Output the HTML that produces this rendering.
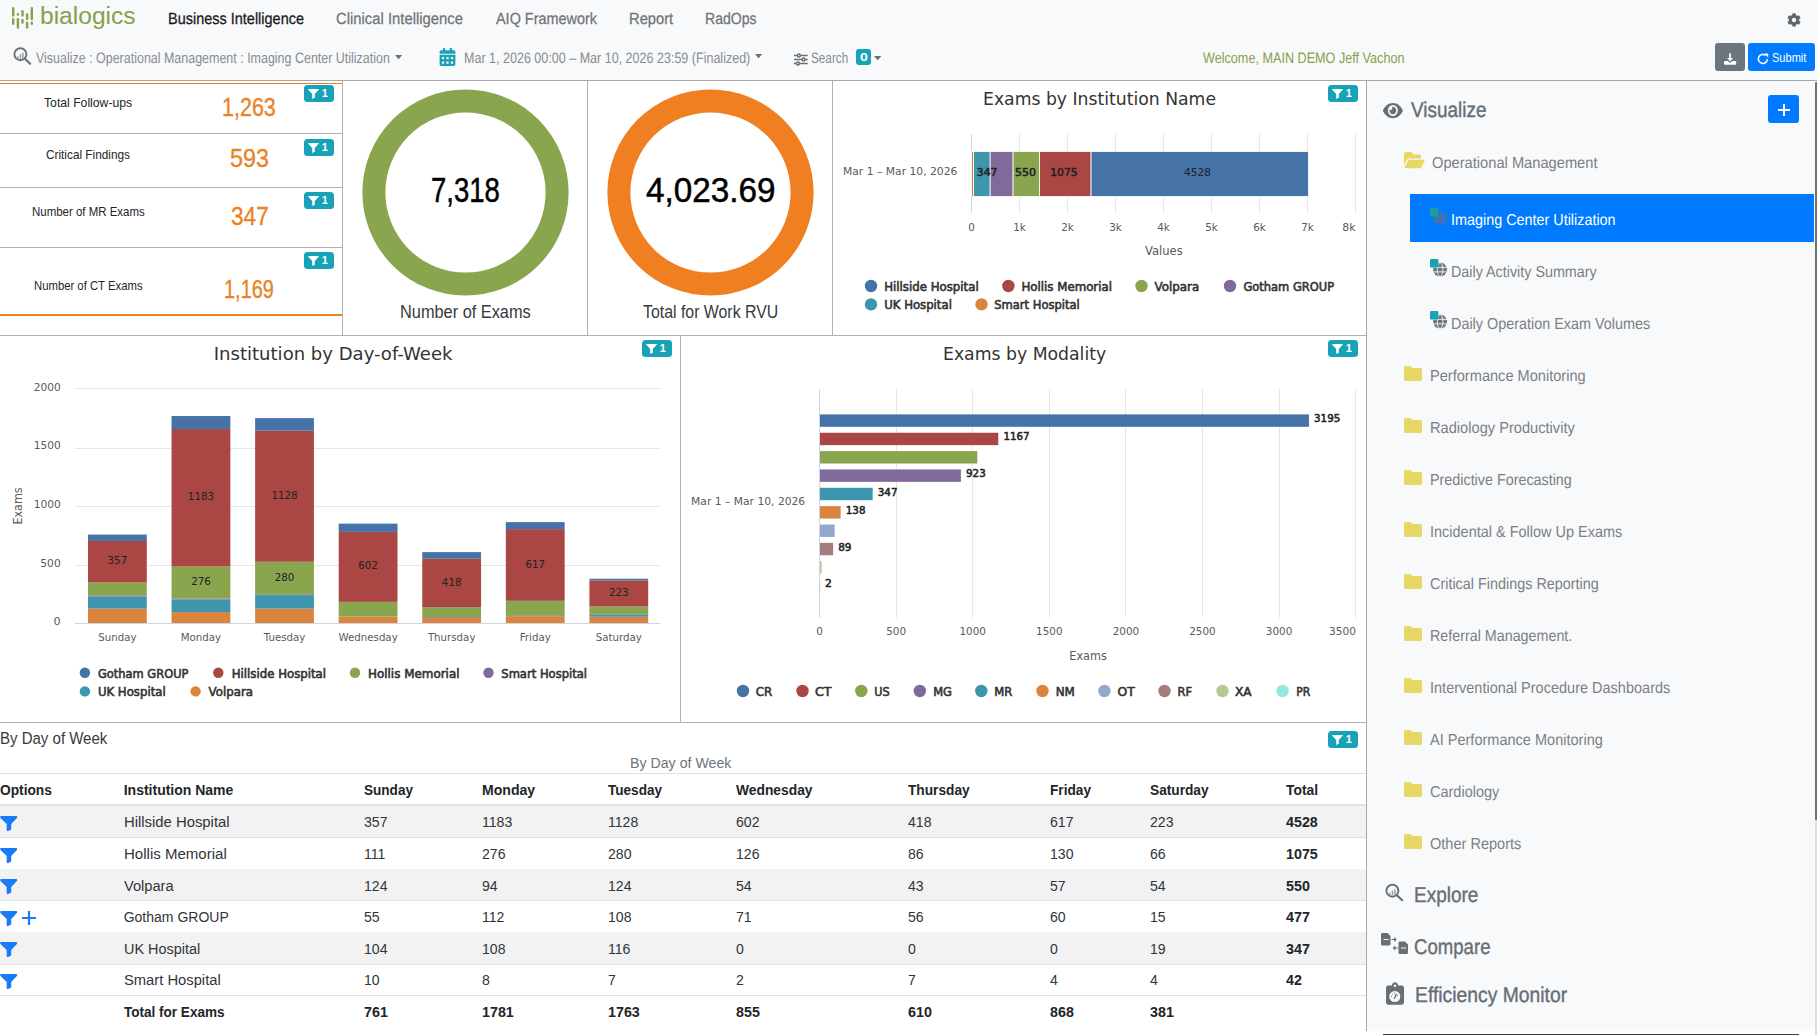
<!DOCTYPE html><html lang="en"><head><meta charset="utf-8"><title>bialogics - Imaging Center Utilization</title><style>
*{box-sizing:border-box;margin:0;padding:0}
html,body{width:1817px;height:1035px;overflow:hidden;background:#fff}
body{position:relative;font-family:"Liberation Sans",sans-serif;color:#212529}
.t{position:absolute;white-space:nowrap;line-height:1;transform-origin:0 0;display:block}
.abs{position:absolute}
svg{position:absolute;overflow:visible}
svg text{font-family:"DejaVu Sans","Liberation Sans",sans-serif}
#header{position:absolute;left:0;top:0;width:1817px;height:81px;background:#f8f9fa;border-bottom:1px solid #a9a9a9}
#main{position:absolute;left:0;top:81px;width:1366px;height:954px;background:#fff}
#side{position:absolute;left:1366px;top:81px;width:451px;height:950px;background:#f8f9fa;border-left:1px solid #a9a9a9}
.hl{position:absolute;height:1px;background:#b2b2b2}
.vl{position:absolute;width:1px;background:#b2b2b2}
.badge{position:absolute;width:30px;height:17px;border-radius:3.5px;background:#17a2b8}
.badge svg{left:3.9px;top:4px}
.badge .t{color:#fff;font-weight:700;font-size:11px;left:17.7px;top:3px}
table,caption,thead,tbody,tfoot,tr,th,td,ul,li,h4,h5,nav{display:contents}
h4,h5,th{font-weight:inherit;font-size:inherit}
</style></head><body>
<header id="header">
<svg width="40" height="36" style="left:0;top:0" viewBox="0 0 40 36"><rect x="12" y="6.9" width="2.4" height="9.7" rx="1.2" fill="#86a04c"/><rect x="12" y="18.1" width="2.4" height="6.9" rx="1.2" fill="#86a04c"/><rect x="16.7" y="13" width="2.4" height="2.7" rx="1.2" fill="#86a04c"/><rect x="16.7" y="18.1" width="2.4" height="10.6" rx="1.2" fill="#86a04c"/><rect x="21.3" y="10.1" width="2.4" height="6.5" rx="1.2" fill="#86a04c"/><rect x="21.3" y="18.8" width="2.4" height="4.9" rx="1.2" fill="#86a04c"/><rect x="25.9" y="13.2" width="2.4" height="6.8" rx="1.2" fill="#86a04c"/><rect x="25.9" y="21.5" width="2.4" height="7.2" rx="1.2" fill="#86a04c"/><rect x="30.6" y="6.9" width="2.4" height="13.4" rx="1.2" fill="#86a04c"/><rect x="30.6" y="21.6" width="2.4" height="3.4" rx="1.2" fill="#86a04c"/></svg>
<span class="t" style="left:39.7px;top:5px;font-size:23px;color:#86a04c;transform:scaleX(1.0682);">bialogics</span>
<nav>
<span class="t" style="left:168.1px;top:11px;font-size:15.5px;color:#16181b;transform:scale(0.9339,1.0409) skewX(0.05deg);transform-origin:0 13px;-webkit-text-stroke:0.25px #16181b;">Business Intelligence</span>
<span class="t" style="left:336px;top:11px;font-size:15.5px;color:#6f7479;transform:scale(0.9564,1.0409) skewX(0.05deg);transform-origin:0 13px;-webkit-text-stroke:0.25px #6f7479;">Clinical Intelligence</span>
<span class="t" style="left:495.7px;top:11px;font-size:15.5px;color:#6f7479;transform:scale(0.9307,1.0409) skewX(0.05deg);transform-origin:0 13px;-webkit-text-stroke:0.25px #6f7479;">AIQ Framework</span>
<span class="t" style="left:628.7px;top:11px;font-size:15.5px;color:#6f7479;transform:scale(0.9500,1.0409) skewX(0.05deg);transform-origin:0 13px;-webkit-text-stroke:0.25px #6f7479;">Report</span>
<span class="t" style="left:705.3px;top:11px;font-size:15.5px;color:#6f7479;transform:scale(0.9075,1.0409) skewX(0.05deg);transform-origin:0 13px;-webkit-text-stroke:0.25px #6f7479;">RadOps</span>
</nav>
<svg width="14" height="14" style="left:1786.6px;top:13px" viewBox="0 0 512 512"><path fill="#5f666d" d="M487.4 315.7l-42.6-24.6c4.3-23.2 4.3-47 0-70.200l42.600-24.600c4.900-2.800 7.100-8.600 5.500-14-11.100-35.600-30-67.800-54.700-94.600-3.800-4.100-10-5.100-14.800-2.300L380.800 110c-17.900-15.400-38.500-27.300-60.800-35.100V25.800c0-5.600-3.900-10.500-9.400-11.700-36.700-8.200-74.300-7.800-109.200 0-5.500 1.200-9.400 6.100-9.400 11.700V75c-22.200 7.900-42.800 19.800-60.800 35.100L88.700 85.500c-4.900-2.800-11-1.900-14.800 2.300-24.700 26.700-43.600 58.900-54.700 94.600-1.700 5.400.6 11.200 5.500 14L67.300 221c-4.300 23.200-4.300 47 0 70.200l-42.600 24.600c-4.900 2.800-7.100 8.600-5.500 14 11.100 35.600 30 67.800 54.700 94.600 3.800 4.100 10 5.100 14.800 2.300l42.600-24.600c17.900 15.400 38.500 27.300 60.800 35.100v49.200c0 5.600 3.900 10.500 9.400 11.700 36.700 8.200 74.300 7.800 109.200 0 5.500-1.200 9.400-6.100 9.400-11.700v-49.200c22.200-7.900 42.800-19.800 60.800-35.100l42.600 24.600c4.900 2.800 11 1.900 14.800-2.300 24.700-26.700 43.600-58.900 54.700-94.600 1.500-5.500-.7-11.300-5.600-14.100zM256 336c-44.100 0-80-35.900-80-80s35.900-80 80-80 80 35.900 80 80-35.900 80-80 80z"/></svg>
<svg width="18" height="17" style="left:12.6px;top:46.8px" viewBox="0 0 18 17"><circle cx="7.400" cy="7.200" r="6" fill="none" stroke="#6b7075" stroke-width="1.900"/><path d="M11.900 11.700L17.200 16.700" stroke="#6b7075" stroke-width="2.100" stroke-linecap="round"/><path d="M4.700 11.700v-2.500M7.500 11.700v-4.500M9.900 11.700v-6" stroke="#9a9fa3" stroke-width="1.500"/></svg>
<span class="t" style="left:36.1px;top:51px;font-size:14.5px;color:#868c92;transform:scale(0.8598,1.0425) skewX(0.05deg);transform-origin:0 12px;">Visualize : Operational Management : Imaging Center Utilization</span>
<svg width="8" height="5" style="left:394.8px;top:54.6px" viewBox="0 0 8 5"><path d="M0 0h7.200L3.600 4.200z" fill="#6b7075"/></svg>
<svg width="17" height="18" style="left:439px;top:48px" viewBox="0 0 448 512"><path fill="#17a2b8" d="M0 464c0 26.500 21.500 48 48 48h352c26.500 0 48-21.500 48-48V192H0v272zm320-196c0-6.600 5.400-12 12-12h40c6.600 0 12 5.400 12 12v40c0 6.600-5.400 12-12 12h-40c-6.600 0-12-5.400-12-12v-40zm0 128c0-6.600 5.400-12 12-12h40c6.600 0 12 5.400 12 12v40c0 6.600-5.400 12-12 12h-40c-6.600 0-12-5.400-12-12v-40zM192 268c0-6.600 5.400-12 12-12h40c6.600 0 12 5.400 12 12v40c0 6.600-5.400 12-12 12h-40c-6.600 0-12-5.400-12-12v-40zm0 128c0-6.600 5.400-12 12-12h40c6.600 0 12 5.400 12 12v40c0 6.600-5.400 12-12 12h-40c-6.600 0-12-5.400-12-12v-40zM64 268c0-6.600 5.400-12 12-12h40c6.600 0 12 5.400 12 12v40c0 6.600-5.400 12-12 12H76c-6.600 0-12-5.400-12-12v-40zm0 128c0-6.600 5.400-12 12-12h40c6.600 0 12 5.400 12 12v40c0 6.600-5.400 12-12 12H76c-6.600 0-12-5.400-12-12v-40zM400 64h-48V16c0-8.800-7.200-16-16-16h-32c-8.800 0-16 7.200-16 16v48H160V16c0-8.800-7.200-16-16-16h-32c-8.800 0-16 7.200-16 16v48H48C21.500 64 0 85.500 0 112v48h448v-48c0-26.500-21.500-48-48-48z"/></svg>
<span class="t" style="left:463.8px;top:51px;font-size:14.5px;color:#868c92;transform:scale(0.8642,1.0425) skewX(0.05deg);transform-origin:0 12px;">Mar 1, 2026 00:00 – Mar 10, 2026 23:59 (Finalized)</span>
<svg width="8" height="5" style="left:754.6px;top:53.6px" viewBox="0 0 8 5"><path d="M0 0h7.200L3.600 4.200z" fill="#6b7075"/></svg>
<svg width="14.200" height="13" style="left:794.1px;top:52.5px" viewBox="0 0 15 13"><g stroke="#6b7075" stroke-width="1.600" fill="#f8f9fa"><path d="M0 2.300h14.500M0 6.500h14.500M0 10.700h14.500"/><circle cx="5.200" cy="2.300" r="1.500"/><circle cx="10.200" cy="6.500" r="1.500"/><circle cx="4.200" cy="10.700" r="1.500"/></g></svg>
<span class="t" style="left:811.3px;top:51px;font-size:14.5px;color:#868c92;transform:scale(0.8097,1.0425) skewX(0.05deg);transform-origin:0 12px;">Search</span>
<span class="abs" style="left:856px;top:49px;width:14.8px;height:15.8px;border-radius:3px;background:#17a2b8"></span>
<span class="t" style="left:859.5px;top:52px;font-size:11px;color:#fff;font-weight:700;transform:scaleX(1.2749);">0</span>
<svg width="8" height="5" style="left:874px;top:55.700px" viewBox="0 0 8 5"><path d="M0 0h7.400L3.700 4.200z" fill="#6b7075"/></svg>
<span class="t" style="left:1203.3px;top:51px;font-size:14.5px;color:#86a04c;transform:scale(0.8713,1.0425) skewX(0.05deg);transform-origin:0 12px;">Welcome, MAIN DEMO Jeff Vachon</span>
<span class="abs" style="left:1715px;top:43px;width:30px;height:28px;border-radius:3px;background:#6c757d"></span>
<svg width="12.200" height="12" style="left:1723.8px;top:52.800px" viewBox="0 0 13 12.500"><path fill="#fff" d="M5.600 0h1.800v5.300h2.300L6.500 8.700 3.300 5.300h2.300z"/><path fill="#fff" d="M1.500 8.400h2.700l2.300 2 2.300-2h2.700c.83 0 1.500.67 1.500 1.500v1.100c0 .83-.67 1.500-1.500 1.500h-10C.67 12.500 0 11.830 0 11v-1.100c0-.83.67-1.500 1.500-1.500z"/></svg>
<span class="abs" style="left:1748px;top:43px;width:67px;height:28px;border-radius:3px;background:#007bff"></span>
<svg width="12" height="12" style="left:1757.4px;top:53.300px" viewBox="0 0 12 12"><path d="M10.300 6.100A4.500 4.500 0 1 1 8.600 2.400" fill="none" stroke="#fff" stroke-width="1.500"/><path d="M7 .4h4.200v4.200z" fill="#fff"/></svg>
<span class="t" style="left:1772.1px;top:52px;font-size:12px;color:#fff;transform:scaleX(0.9210);">Submit</span>
</header>
<main id="main">
<i class="hl" style="left:0px;top:254px;width:1366px;"></i>
<i class="hl" style="left:0px;top:641px;width:1366px;"></i>
<i class="vl" style="left:342px;top:0px;height:254px;"></i>
<i class="vl" style="left:587px;top:0px;height:254px;"></i>
<i class="vl" style="left:832px;top:0px;height:254px;"></i>
<i class="vl" style="left:680px;top:254px;height:387px;"></i>
<section id="kpi">
<i class="hl" style="left:0px;top:2px;width:342px;background:#e98326;"></i>
<i class="hl" style="left:0px;top:233px;width:342px;background:#e98326;height:1.5px;"></i>
<i class="hl" style="left:0px;top:52px;width:342px;"></i>
<i class="hl" style="left:0px;top:106px;width:342px;"></i>
<i class="hl" style="left:0px;top:166px;width:342px;"></i>
<span class="t" style="left:44.3px;top:16px;font-size:12.6px;color:#212529;transform:scaleX(0.9688);">Total Follow-ups</span>
<span class="t" style="left:222px;top:14px;font-size:25px;color:#e98326;transform:scaleX(0.8599);-webkit-text-stroke:0.35px #e98326;">1,263</span>
<span class="badge" style="left:304px;top:4px"><svg width="11" height="10" viewBox="0 0 11 10"><path fill="#fff" d="M.3 0h10.400c.3 0 .4.300.2.500L6.800 5v3.700L4.200 10V5L.1.500C-.1.300 0 0 .3 0z"/></svg><span class="t">1</span></span>
<span class="t" style="left:46.2px;top:68px;font-size:12.6px;color:#212529;transform:scaleX(0.9372);">Critical Findings</span>
<span class="t" style="left:229.5px;top:65px;font-size:25px;color:#e98326;transform:scaleX(0.9350);-webkit-text-stroke:0.35px #e98326;">593</span>
<span class="badge" style="left:304px;top:57.5px"><svg width="11" height="10" viewBox="0 0 11 10"><path fill="#fff" d="M.3 0h10.400c.3 0 .4.300.2.500L6.800 5v3.700L4.200 10V5L.1.500C-.1.300 0 0 .3 0z"/></svg><span class="t">1</span></span>
<span class="t" style="left:32px;top:125px;font-size:12.6px;color:#212529;transform:scaleX(0.9102);">Number of MR Exams</span>
<span class="t" style="left:230.5px;top:123px;font-size:25px;color:#e98326;transform:scaleX(0.9038);-webkit-text-stroke:0.35px #e98326;">347</span>
<span class="badge" style="left:304px;top:111px"><svg width="11" height="10" viewBox="0 0 11 10"><path fill="#fff" d="M.3 0h10.400c.3 0 .4.300.2.500L6.800 5v3.700L4.200 10V5L.1.500C-.1.300 0 0 .3 0z"/></svg><span class="t">1</span></span>
<span class="t" style="left:33.9px;top:199px;font-size:12.6px;color:#212529;transform:scaleX(0.8982);">Number of CT Exams</span>
<span class="t" style="left:224px;top:196px;font-size:25px;color:#e98326;transform:scaleX(0.7976);-webkit-text-stroke:0.35px #e98326;">1,169</span>
<span class="badge" style="left:304px;top:171px"><svg width="11" height="10" viewBox="0 0 11 10"><path fill="#fff" d="M.3 0h10.400c.3 0 .4.300.2.500L6.800 5v3.700L4.200 10V5L.1.500C-.1.300 0 0 .3 0z"/></svg><span class="t">1</span></span>
</section>
<section><svg width="245" height="254" style="left:342.5px;top:0" viewBox="342.5 81 245 254"><circle cx="465" cy="192.500" r="91.600" fill="none" stroke="#89a54e" stroke-width="23"/></svg><span class="t" style="left:430.5px;top:92px;font-size:35.5px;color:#000;transform:scaleX(0.7744);-webkit-text-stroke:0.5px #000;">7,318</span><span class="t" style="left:400px;top:223px;font-size:17.5px;color:#343a40;transform:scaleX(0.9333);">Number of Exams</span></section>
<section><svg width="245" height="254" style="left:588.4px;top:0" viewBox="588.4 81 245 254"><circle cx="710.9" cy="192.500" r="91.600" fill="none" stroke="#f07f22" stroke-width="23"/></svg><span class="t" style="left:645.7px;top:92px;font-size:35.5px;color:#000;transform:scaleX(0.9371);-webkit-text-stroke:0.5px #000;">4,023.69</span><span class="t" style="left:642.5px;top:223px;font-size:17.5px;color:#343a40;transform:scaleX(0.9066);">Total for Work RVU</span></section>
<section id="c1"><svg width="533" height="253" style="left:833px;top:1px" viewBox="833 82 533 253"><text x="983" y="104.6" font-size="17" fill="#333" textLength="233" lengthAdjust="spacingAndGlyphs">Exams by Institution Name</text><path d="M971.5 134V212.500" stroke="#ccd6eb" stroke-width="1"/><path d="M1019.5 134V212.500" stroke="#e6e6e6" stroke-width="1"/><path d="M1067.5 134V212.500" stroke="#e6e6e6" stroke-width="1"/><path d="M1115.5 134V212.500" stroke="#e6e6e6" stroke-width="1"/><path d="M1163.5 134V212.500" stroke="#e6e6e6" stroke-width="1"/><path d="M1211.5 134V212.500" stroke="#e6e6e6" stroke-width="1"/><path d="M1259.5 134V212.500" stroke="#e6e6e6" stroke-width="1"/><path d="M1307.5 134V212.500" stroke="#e6e6e6" stroke-width="1"/><path d="M1355.5 134V212.500" stroke="#e6e6e6" stroke-width="1"/><rect x="971.5" y="151.500" width="2.02" height="45" fill="#db843d" stroke="#fff" stroke-width="0.800"/><rect x="973.52" y="151.500" width="16.66" height="45" fill="#3d96ae" stroke="#fff" stroke-width="0.800"/><rect x="990.17" y="151.500" width="22.9" height="45" fill="#80699b" stroke="#fff" stroke-width="0.800"/><rect x="1013.07" y="151.500" width="26.4" height="45" fill="#89a54e" stroke="#fff" stroke-width="0.800"/><rect x="1039.47" y="151.500" width="51.6" height="45" fill="#aa4643" stroke="#fff" stroke-width="0.800"/><rect x="1091.07" y="151.500" width="217.34" height="45" fill="#4572a7" stroke="#fff" stroke-width="0.800"/><text x="976.8" y="176" font-size="11" fill="#222" textLength="20.7" lengthAdjust="spacingAndGlyphs" stroke="#222" stroke-width="0.550">347</text><text x="1015.1" y="176" font-size="11" fill="#222" textLength="20.9" lengthAdjust="spacingAndGlyphs" stroke="#222" stroke-width="0.550">550</text><text x="1050.3" y="176" font-size="11" fill="#222" textLength="27.2" lengthAdjust="spacingAndGlyphs" stroke="#222" stroke-width="0.550">1075</text><text x="1183.9" y="176" font-size="11" fill="#222" textLength="27.1" lengthAdjust="spacingAndGlyphs">4528</text><text x="843" y="175" font-size="11" fill="#5a5a5a" textLength="114.4" lengthAdjust="spacingAndGlyphs">Mar 1 – Mar 10, 2026</text><text x="968.21" y="230.7" font-size="11" fill="#5a5a5a" textLength="6.58" lengthAdjust="spacingAndGlyphs">0</text><text x="1013.22" y="230.7" font-size="11" fill="#5a5a5a" textLength="12.57" lengthAdjust="spacingAndGlyphs">1k</text><text x="1061.22" y="230.7" font-size="11" fill="#5a5a5a" textLength="12.57" lengthAdjust="spacingAndGlyphs">2k</text><text x="1109.22" y="230.7" font-size="11" fill="#5a5a5a" textLength="12.57" lengthAdjust="spacingAndGlyphs">3k</text><text x="1157.22" y="230.7" font-size="11" fill="#5a5a5a" textLength="12.57" lengthAdjust="spacingAndGlyphs">4k</text><text x="1205.22" y="230.7" font-size="11" fill="#5a5a5a" textLength="12.57" lengthAdjust="spacingAndGlyphs">5k</text><text x="1253.22" y="230.7" font-size="11" fill="#5a5a5a" textLength="12.57" lengthAdjust="spacingAndGlyphs">6k</text><text x="1301.22" y="230.7" font-size="11" fill="#5a5a5a" textLength="12.57" lengthAdjust="spacingAndGlyphs">7k</text><text x="1342.2" y="230.7" font-size="11" fill="#5a5a5a" textLength="13.3" lengthAdjust="spacingAndGlyphs">8k</text><text x="1144.9" y="255" font-size="12" fill="#5a5a5a" textLength="37.8" lengthAdjust="spacingAndGlyphs">Values</text><circle cx="871" cy="286" r="6.200" fill="#4572a7"/><text x="884.2" y="290.5" font-size="12" fill="#333" textLength="94.5" lengthAdjust="spacingAndGlyphs" stroke="#333" stroke-width="0.600">Hillside Hospital</text><circle cx="1008.4" cy="286" r="6.200" fill="#aa4643"/><text x="1021.4" y="290.5" font-size="12" fill="#333" textLength="90.6" lengthAdjust="spacingAndGlyphs" stroke="#333" stroke-width="0.600">Hollis Memorial</text><circle cx="1141.5" cy="286" r="6.200" fill="#89a54e"/><text x="1154.5" y="290.5" font-size="12" fill="#333" textLength="44.7" lengthAdjust="spacingAndGlyphs" stroke="#333" stroke-width="0.600">Volpara</text><circle cx="1230" cy="286" r="6.200" fill="#80699b"/><text x="1243.4" y="290.5" font-size="12" fill="#333" textLength="90.8" lengthAdjust="spacingAndGlyphs" stroke="#333" stroke-width="0.600">Gotham GROUP</text><circle cx="871" cy="304.4" r="6.200" fill="#3d96ae"/><text x="884.2" y="308.6" font-size="12" fill="#333" textLength="67.7" lengthAdjust="spacingAndGlyphs" stroke="#333" stroke-width="0.600">UK Hospital</text><circle cx="981.5" cy="304.4" r="6.200" fill="#db843d"/><text x="994.3" y="308.6" font-size="12" fill="#333" textLength="85.4" lengthAdjust="spacingAndGlyphs" stroke="#333" stroke-width="0.600">Smart Hospital</text></svg>
<span class="badge" style="left:1328px;top:4px"><svg width="11" height="10" viewBox="0 0 11 10"><path fill="#fff" d="M.3 0h10.400c.3 0 .4.300.2.500L6.800 5v3.700L4.200 10V5L.1.500C-.1.300 0 0 .3 0z"/></svg><span class="t">1</span></span>
</section>
<section id="c2"><svg width="680" height="386" style="left:0;top:255px" viewBox="0 336 680 386"><text x="213.8" y="359.7" font-size="17" fill="#333" textLength="238.7" lengthAdjust="spacingAndGlyphs">Institution by Day-of-Week</text><path d="M74.500 565.5H660.500" stroke="#e6e6e6" stroke-width="1"/><text x="40.34" y="567" font-size="11" fill="#5a5a5a" textLength="20.36" lengthAdjust="spacingAndGlyphs">500</text><path d="M74.500 506.5H660.500" stroke="#e6e6e6" stroke-width="1"/><text x="33.72" y="508" font-size="11" fill="#5a5a5a" textLength="26.98" lengthAdjust="spacingAndGlyphs">1000</text><path d="M74.500 448.5H660.500" stroke="#e6e6e6" stroke-width="1"/><text x="33.72" y="449" font-size="11" fill="#5a5a5a" textLength="26.98" lengthAdjust="spacingAndGlyphs">1500</text><path d="M74.500 388.5H660.500" stroke="#e6e6e6" stroke-width="1"/><text x="33.72" y="391" font-size="11" fill="#5a5a5a" textLength="26.98" lengthAdjust="spacingAndGlyphs">2000</text><text x="53.6" y="625" font-size="11" fill="#5a5a5a" textLength="7.1" lengthAdjust="spacingAndGlyphs">0</text><rect x="87.98" y="608.59" width="58.800" height="14.41" fill="#db843d"/><rect x="87.98" y="596.51" width="58.800" height="12.08" fill="#3d96ae"/><rect x="87.98" y="595.34" width="58.800" height="1.16" fill="#80699b"/><rect x="87.98" y="582.45" width="58.800" height="12.9" fill="#89a54e"/><rect x="87.98" y="540.96" width="58.800" height="41.48" fill="#aa4643"/><rect x="87.98" y="534.57" width="58.800" height="6.39" fill="#4572a7"/><text x="98.25" y="640.5" font-size="11" fill="#5a5a5a" textLength="38.28" lengthAdjust="spacingAndGlyphs">Sunday</text><rect x="171.55" y="612.08" width="58.800" height="10.92" fill="#db843d"/><rect x="171.55" y="599.53" width="58.800" height="12.55" fill="#3d96ae"/><rect x="171.55" y="598.6" width="58.800" height="0.93" fill="#80699b"/><rect x="171.55" y="566.53" width="58.800" height="32.07" fill="#89a54e"/><rect x="171.55" y="429.06" width="58.800" height="137.46" fill="#aa4643"/><rect x="171.55" y="416.05" width="58.800" height="13.01" fill="#4572a7"/><text x="180.76" y="640.5" font-size="11" fill="#5a5a5a" textLength="40.39" lengthAdjust="spacingAndGlyphs">Monday</text><rect x="255.12" y="608.59" width="58.800" height="14.41" fill="#db843d"/><rect x="255.12" y="595.11" width="58.800" height="13.48" fill="#3d96ae"/><rect x="255.12" y="594.3" width="58.800" height="0.81" fill="#80699b"/><rect x="255.12" y="561.76" width="58.800" height="32.54" fill="#89a54e"/><rect x="255.12" y="430.69" width="58.800" height="131.07" fill="#aa4643"/><rect x="255.12" y="418.14" width="58.800" height="12.55" fill="#4572a7"/><text x="263.71" y="640.5" font-size="11" fill="#5a5a5a" textLength="41.62" lengthAdjust="spacingAndGlyphs">Tuesday</text><rect x="338.7" y="616.73" width="58.800" height="6.27" fill="#db843d"/><rect x="338.7" y="616.49" width="58.800" height="0.23" fill="#80699b"/><rect x="338.7" y="601.85" width="58.800" height="14.64" fill="#89a54e"/><rect x="338.7" y="531.9" width="58.800" height="69.95" fill="#aa4643"/><rect x="338.7" y="523.65" width="58.800" height="8.25" fill="#4572a7"/><text x="338.48" y="640.5" font-size="11" fill="#5a5a5a" textLength="59.23" lengthAdjust="spacingAndGlyphs">Wednesday</text><rect x="422.26" y="618" width="58.800" height="5" fill="#db843d"/><rect x="422.26" y="617.19" width="58.800" height="0.81" fill="#80699b"/><rect x="422.26" y="607.2" width="58.800" height="9.99" fill="#89a54e"/><rect x="422.26" y="558.63" width="58.800" height="48.57" fill="#aa4643"/><rect x="422.26" y="552.12" width="58.800" height="6.51" fill="#4572a7"/><text x="427.88" y="640.5" font-size="11" fill="#5a5a5a" textLength="47.57" lengthAdjust="spacingAndGlyphs">Thursday</text><rect x="505.84" y="616.38" width="58.800" height="6.62" fill="#db843d"/><rect x="505.84" y="615.91" width="58.800" height="0.46" fill="#80699b"/><rect x="505.84" y="600.81" width="58.800" height="15.11" fill="#89a54e"/><rect x="505.84" y="529.11" width="58.800" height="71.7" fill="#aa4643"/><rect x="505.84" y="522.14" width="58.800" height="6.97" fill="#4572a7"/><text x="519.73" y="640.5" font-size="11" fill="#5a5a5a" textLength="31.01" lengthAdjust="spacingAndGlyphs">Friday</text><rect x="589.4" y="616.73" width="58.800" height="6.27" fill="#db843d"/><rect x="589.4" y="614.52" width="58.800" height="2.21" fill="#3d96ae"/><rect x="589.4" y="614.05" width="58.800" height="0.46" fill="#80699b"/><rect x="589.4" y="606.38" width="58.800" height="7.67" fill="#89a54e"/><rect x="589.4" y="580.47" width="58.800" height="25.91" fill="#aa4643"/><rect x="589.4" y="578.73" width="58.800" height="1.74" fill="#4572a7"/><text x="595.75" y="640.5" font-size="11" fill="#5a5a5a" textLength="46.1" lengthAdjust="spacingAndGlyphs">Saturday</text><path d="M75 623.500H660.500" stroke="#ccd6eb" stroke-width="1"/><text x="107.56" y="564.3" font-size="11" fill="#222" textLength="19.65" lengthAdjust="spacingAndGlyphs">357</text><text x="191.13" y="585.16" font-size="11" fill="#222" textLength="19.65" lengthAdjust="spacingAndGlyphs">276</text><text x="187.85" y="500.39" font-size="11" fill="#222" textLength="26.2" lengthAdjust="spacingAndGlyphs">1183</text><text x="274.7" y="580.63" font-size="11" fill="#222" textLength="19.65" lengthAdjust="spacingAndGlyphs">280</text><text x="271.42" y="498.83" font-size="11" fill="#222" textLength="26.2" lengthAdjust="spacingAndGlyphs">1128</text><text x="358.27" y="569.48" font-size="11" fill="#222" textLength="19.65" lengthAdjust="spacingAndGlyphs">602</text><text x="441.84" y="585.51" font-size="11" fill="#222" textLength="19.65" lengthAdjust="spacingAndGlyphs">418</text><text x="525.41" y="567.56" font-size="11" fill="#222" textLength="19.65" lengthAdjust="spacingAndGlyphs">617</text><text x="608.98" y="596.03" font-size="11" fill="#222" textLength="19.65" lengthAdjust="spacingAndGlyphs">223</text><text transform="translate(21.500 506) rotate(-90)" text-anchor="middle" font-size="12" fill="#5a5a5a" textLength="37" lengthAdjust="spacingAndGlyphs">Exams</text><circle cx="84.9" cy="672.8" r="5.200" fill="#4572a7"/><text x="97.9" y="677.7" font-size="12" fill="#333" textLength="90.6" lengthAdjust="spacingAndGlyphs" stroke="#333" stroke-width="0.600">Gotham GROUP</text><circle cx="218.3" cy="672.8" r="5.200" fill="#aa4643"/><text x="231.7" y="677.7" font-size="12" fill="#333" textLength="94.4" lengthAdjust="spacingAndGlyphs" stroke="#333" stroke-width="0.600">Hillside Hospital</text><circle cx="355" cy="672.8" r="5.200" fill="#89a54e"/><text x="368" y="677.7" font-size="12" fill="#333" textLength="91.5" lengthAdjust="spacingAndGlyphs" stroke="#333" stroke-width="0.600">Hollis Memorial</text><circle cx="488.5" cy="672.8" r="5.200" fill="#80699b"/><text x="501.3" y="677.7" font-size="12" fill="#333" textLength="85.7" lengthAdjust="spacingAndGlyphs" stroke="#333" stroke-width="0.600">Smart Hospital</text><circle cx="84.9" cy="691.4" r="5.200" fill="#3d96ae"/><text x="97.9" y="696.1" font-size="12" fill="#333" textLength="67.8" lengthAdjust="spacingAndGlyphs" stroke="#333" stroke-width="0.600">UK Hospital</text><circle cx="195.6" cy="691.4" r="5.200" fill="#db843d"/><text x="208.6" y="696.1" font-size="12" fill="#333" textLength="44.4" lengthAdjust="spacingAndGlyphs" stroke="#333" stroke-width="0.600">Volpara</text></svg>
<span class="badge" style="left:642px;top:259px"><svg width="11" height="10" viewBox="0 0 11 10"><path fill="#fff" d="M.3 0h10.400c.3 0 .4.300.2.500L6.800 5v3.700L4.200 10V5L.1.500C-.1.300 0 0 .3 0z"/></svg><span class="t">1</span></span>
</section>
<section id="c3"><svg width="685" height="386" style="left:681px;top:255px" viewBox="681 336 685 386"><text x="943" y="359.7" font-size="17" fill="#333" textLength="163.2" lengthAdjust="spacingAndGlyphs">Exams by Modality</text><path d="M819.5 389V617.500" stroke="#ccd6eb" stroke-width="1"/><path d="M896.5 389V617.500" stroke="#e6e6e6" stroke-width="1"/><path d="M972.5 389V617.500" stroke="#e6e6e6" stroke-width="1"/><path d="M1049.5 389V617.500" stroke="#e6e6e6" stroke-width="1"/><path d="M1125.5 389V617.500" stroke="#e6e6e6" stroke-width="1"/><path d="M1202.5 389V617.500" stroke="#e6e6e6" stroke-width="1"/><path d="M1279.5 389V617.500" stroke="#e6e6e6" stroke-width="1"/><path d="M1355.5 389V617.500" stroke="#e6e6e6" stroke-width="1"/><rect x="820" y="414.4" width="488.97" height="12.400" fill="#4572a7"/><text x="1314.07" y="422.1" font-size="11" fill="#222" textLength="26.2" lengthAdjust="spacingAndGlyphs" stroke="#222" stroke-width="0.550">3195</text><rect x="820" y="432.75" width="178.28" height="12.400" fill="#aa4643"/><text x="1003.38" y="440.45" font-size="11" fill="#222" textLength="26.2" lengthAdjust="spacingAndGlyphs" stroke="#222" stroke-width="0.550">1167</text><rect x="820" y="451.1" width="157.3" height="12.400" fill="#89a54e"/><rect x="820" y="469.45" width="140.9" height="12.400" fill="#80699b"/><text x="966" y="477.15" font-size="11" fill="#222" textLength="19.75" lengthAdjust="spacingAndGlyphs" stroke="#222" stroke-width="0.550">923</text><rect x="820" y="487.8" width="52.66" height="12.400" fill="#3d96ae"/><text x="877.76" y="495.5" font-size="11" fill="#222" textLength="19.75" lengthAdjust="spacingAndGlyphs" stroke="#222" stroke-width="0.550">347</text><rect x="820" y="506.15" width="20.64" height="12.400" fill="#db843d"/><text x="845.74" y="513.85" font-size="11" fill="#222" textLength="19.75" lengthAdjust="spacingAndGlyphs" stroke="#222" stroke-width="0.550">138</text><rect x="820" y="524.5" width="14.67" height="12.400" fill="#92a8cd"/><rect x="820" y="542.85" width="13.13" height="12.400" fill="#a47d7c"/><text x="838.23" y="550.55" font-size="11" fill="#222" textLength="13.3" lengthAdjust="spacingAndGlyphs" stroke="#222" stroke-width="0.550">89</text><rect x="820" y="561.2" width="1.64" height="12.400" fill="#b5ca92"/><rect x="820" y="579.55" width="0.3" height="12.400" fill="#92e8e1"/><text x="824.91" y="587.25" font-size="11" fill="#222" textLength="6.85" lengthAdjust="spacingAndGlyphs" stroke="#222" stroke-width="0.550">2</text><text x="691.1" y="504.5" font-size="11" fill="#5a5a5a" textLength="114.1" lengthAdjust="spacingAndGlyphs">Mar 1 – Mar 10, 2026</text><text x="816.19" y="635.4" font-size="11" fill="#5a5a5a" textLength="6.62" lengthAdjust="spacingAndGlyphs">0</text><text x="886.17" y="635.4" font-size="11" fill="#5a5a5a" textLength="19.86" lengthAdjust="spacingAndGlyphs">500</text><text x="959.46" y="635.4" font-size="11" fill="#5a5a5a" textLength="26.48" lengthAdjust="spacingAndGlyphs">1000</text><text x="1036.06" y="635.4" font-size="11" fill="#5a5a5a" textLength="26.48" lengthAdjust="spacingAndGlyphs">1500</text><text x="1112.66" y="635.4" font-size="11" fill="#5a5a5a" textLength="26.48" lengthAdjust="spacingAndGlyphs">2000</text><text x="1189.26" y="635.4" font-size="11" fill="#5a5a5a" textLength="26.48" lengthAdjust="spacingAndGlyphs">2500</text><text x="1265.86" y="635.4" font-size="11" fill="#5a5a5a" textLength="26.48" lengthAdjust="spacingAndGlyphs">3000</text><text x="1329" y="635.4" font-size="11" fill="#5a5a5a" textLength="26.9" lengthAdjust="spacingAndGlyphs">3500</text><text x="1069.3" y="660" font-size="12" fill="#5a5a5a" textLength="37.5" lengthAdjust="spacingAndGlyphs">Exams</text><circle cx="743" cy="691" r="6.200" fill="#4572a7"/><text x="755.7" y="696.1" font-size="12" fill="#333" textLength="16.5" lengthAdjust="spacingAndGlyphs" stroke="#333" stroke-width="0.600">CR</text><circle cx="802.5" cy="691" r="6.200" fill="#aa4643"/><text x="814.9" y="696.1" font-size="12" fill="#333" textLength="16.6" lengthAdjust="spacingAndGlyphs" stroke="#333" stroke-width="0.600">CT</text><circle cx="861.3" cy="691" r="6.200" fill="#89a54e"/><text x="874.3" y="696.1" font-size="12" fill="#333" textLength="15.4" lengthAdjust="spacingAndGlyphs" stroke="#333" stroke-width="0.600">US</text><circle cx="919.8" cy="691" r="6.200" fill="#80699b"/><text x="933.2" y="696.1" font-size="12" fill="#333" textLength="18.8" lengthAdjust="spacingAndGlyphs" stroke="#333" stroke-width="0.600">MG</text><circle cx="981.3" cy="691" r="6.200" fill="#3d96ae"/><text x="994.3" y="696.1" font-size="12" fill="#333" textLength="18.1" lengthAdjust="spacingAndGlyphs" stroke="#333" stroke-width="0.600">MR</text><circle cx="1042.5" cy="691" r="6.200" fill="#db843d"/><text x="1055.7" y="696.1" font-size="12" fill="#333" textLength="19.2" lengthAdjust="spacingAndGlyphs" stroke="#333" stroke-width="0.600">NM</text><circle cx="1104.4" cy="691" r="6.200" fill="#92a8cd"/><text x="1117.4" y="696.1" font-size="12" fill="#333" textLength="17.3" lengthAdjust="spacingAndGlyphs" stroke="#333" stroke-width="0.600">OT</text><circle cx="1164.5" cy="691" r="6.200" fill="#a47d7c"/><text x="1177.5" y="696.1" font-size="12" fill="#333" textLength="14.5" lengthAdjust="spacingAndGlyphs" stroke="#333" stroke-width="0.600">RF</text><circle cx="1222.5" cy="691" r="6.200" fill="#b5ca92"/><text x="1234.9" y="696.1" font-size="12" fill="#333" textLength="16.6" lengthAdjust="spacingAndGlyphs" stroke="#333" stroke-width="0.600">XA</text><circle cx="1282.6" cy="691" r="6.200" fill="#92e8e1"/><text x="1296.2" y="696.1" font-size="12" fill="#333" textLength="14.1" lengthAdjust="spacingAndGlyphs" stroke="#333" stroke-width="0.600">PR</text></svg>
<span class="badge" style="left:1328px;top:259px"><svg width="11" height="10" viewBox="0 0 11 10"><path fill="#fff" d="M.3 0h10.400c.3 0 .4.300.2.500L6.800 5v3.700L4.200 10V5L.1.500C-.1.300 0 0 .3 0z"/></svg><span class="t">1</span></span>
</section>
<section id="tbl">
<h5><span class="t" style="left:0.1px;top:649px;font-size:17.2px;color:#343a40;transform:scaleX(0.8732);">By Day of Week</span></h5>
<span class="badge" style="left:1328px;top:650px"><svg width="11" height="10" viewBox="0 0 11 10"><path fill="#fff" d="M.3 0h10.400c.3 0 .4.300.2.500L6.800 5v3.700L4.200 10V5L.1.500C-.1.300 0 0 .3 0z"/></svg><span class="t">1</span></span>
<table>
<caption><span class="t" style="left:630.1px;top:675px;font-size:14px;color:#6c757d;transform:scaleX(1.0129);">By Day of Week</span></caption>
<thead><tr>
<i class="hl" style="left:0px;top:692px;width:1366px;background:#dee2e6;"></i>
<i class="hl" style="left:0px;top:723px;width:1366px;background:#dee2e6;height:2px;"></i>
<th><span class="t" style="left:-0.1px;top:702px;font-size:14px;color:#212529;font-weight:700;transform:scaleX(0.9814);">Options</span></th>
<th><span class="t" style="left:123.7px;top:702px;font-size:14px;color:#212529;font-weight:700;">Institution Name</span></th>
<th><span class="t" style="left:364.3px;top:702px;font-size:14px;color:#212529;font-weight:700;transform:scaleX(0.9690);">Sunday</span></th>
<th><span class="t" style="left:481.8px;top:702px;font-size:14px;color:#212529;font-weight:700;transform:scaleX(1.0058);">Monday</span></th>
<th><span class="t" style="left:608.2px;top:702px;font-size:14px;color:#212529;font-weight:700;transform:scaleX(0.9684);">Tuesday</span></th>
<th><span class="t" style="left:735.5px;top:702px;font-size:14px;color:#212529;font-weight:700;transform:scaleX(0.9865);">Wednesday</span></th>
<th><span class="t" style="left:907.6px;top:702px;font-size:14px;color:#212529;font-weight:700;transform:scaleX(0.9791);">Thursday</span></th>
<th><span class="t" style="left:1050px;top:702px;font-size:14px;color:#212529;font-weight:700;transform:scaleX(0.9759);">Friday</span></th>
<th><span class="t" style="left:1149.9px;top:702px;font-size:14px;color:#212529;font-weight:700;transform:scaleX(0.9781);">Saturday</span></th>
<th><span class="t" style="left:1286.2px;top:702px;font-size:14px;color:#212529;font-weight:700;transform:scaleX(0.9906);">Total</span></th>
</tr></thead><tbody>
<tr>
<i class="abs" style="left:0;top:725px;width:1366px;height:31.600px;background:#f2f2f2"></i>
<i class="hl" style="left:0px;top:756px;width:1366px;background:#dee2e6;"></i>
<td><svg width="17.400" height="15.200" style="left:0.200px;top:735px" viewBox="0 0 17 15"><path fill="#1a7cf5" d="M1.200 0h14.600c1 0 1.500 1.200.8 1.900L11 8v4.800c0 .4-.2.700-.5.900l-2.500 1.200c-.7.300-1.500-.2-1.500-1V8L.4 1.900C-.3 1.200.2 0 1.200 0z"/></svg></td>
<td><span class="t" style="left:123.7px;top:734px;font-size:14px;color:#30353a;transform:scaleX(1.0603);">Hillside Hospital</span></td>
<td><span class="t" style="left:364.3px;top:734px;font-size:14px;color:#30353a;transform:scaleX(1.0050);">357</span></td>
<td><span class="t" style="left:481.8px;top:734px;font-size:14px;color:#30353a;transform:scaleX(1.0050);">1183</span></td>
<td><span class="t" style="left:608.2px;top:734px;font-size:14px;color:#30353a;transform:scaleX(1.0050);">1128</span></td>
<td><span class="t" style="left:735.5px;top:734px;font-size:14px;color:#30353a;transform:scaleX(1.0050);">602</span></td>
<td><span class="t" style="left:907.6px;top:734px;font-size:14px;color:#30353a;transform:scaleX(1.0050);">418</span></td>
<td><span class="t" style="left:1050px;top:734px;font-size:14px;color:#30353a;transform:scaleX(1.0050);">617</span></td>
<td><span class="t" style="left:1149.9px;top:734px;font-size:14px;color:#30353a;transform:scaleX(1.0050);">223</span></td>
<td><span class="t" style="left:1286.2px;top:734px;font-size:14px;color:#212529;font-weight:700;transform:scaleX(1.0200);">4528</span></td>
</tr>
<tr>
<i class="hl" style="left:0px;top:788px;width:1366px;background:#dee2e6;"></i>
<td><svg width="17.400" height="15.200" style="left:0.200px;top:766.6px" viewBox="0 0 17 15"><path fill="#1a7cf5" d="M1.200 0h14.600c1 0 1.500 1.200.8 1.900L11 8v4.800c0 .4-.2.700-.5.900l-2.500 1.200c-.7.300-1.500-.2-1.500-1V8L.4 1.900C-.3 1.200.2 0 1.200 0z"/></svg></td>
<td><span class="t" style="left:123.7px;top:766px;font-size:14px;color:#30353a;transform:scaleX(1.0743);">Hollis Memorial</span></td>
<td><span class="t" style="left:364.3px;top:766px;font-size:14px;color:#30353a;transform:scaleX(1.0050);">111</span></td>
<td><span class="t" style="left:481.8px;top:766px;font-size:14px;color:#30353a;transform:scaleX(1.0050);">276</span></td>
<td><span class="t" style="left:608.2px;top:766px;font-size:14px;color:#30353a;transform:scaleX(1.0050);">280</span></td>
<td><span class="t" style="left:735.5px;top:766px;font-size:14px;color:#30353a;transform:scaleX(1.0050);">126</span></td>
<td><span class="t" style="left:907.6px;top:766px;font-size:14px;color:#30353a;transform:scaleX(1.0050);">86</span></td>
<td><span class="t" style="left:1050px;top:766px;font-size:14px;color:#30353a;transform:scaleX(1.0050);">130</span></td>
<td><span class="t" style="left:1149.9px;top:766px;font-size:14px;color:#30353a;transform:scaleX(1.0050);">66</span></td>
<td><span class="t" style="left:1286.2px;top:766px;font-size:14px;color:#212529;font-weight:700;transform:scaleX(1.0200);">1075</span></td>
</tr>
<tr>
<i class="abs" style="left:0;top:788.2px;width:1366px;height:31.600px;background:#f2f2f2"></i>
<i class="hl" style="left:0px;top:819px;width:1366px;background:#dee2e6;"></i>
<td><svg width="17.400" height="15.200" style="left:0.200px;top:798.2px" viewBox="0 0 17 15"><path fill="#1a7cf5" d="M1.200 0h14.600c1 0 1.500 1.200.8 1.900L11 8v4.800c0 .4-.2.700-.5.900l-2.500 1.200c-.7.300-1.500-.2-1.500-1V8L.4 1.900C-.3 1.200.2 0 1.200 0z"/></svg></td>
<td><span class="t" style="left:123.7px;top:798px;font-size:14px;color:#30353a;transform:scaleX(1.0445);">Volpara</span></td>
<td><span class="t" style="left:364.3px;top:798px;font-size:14px;color:#30353a;transform:scaleX(1.0050);">124</span></td>
<td><span class="t" style="left:481.8px;top:798px;font-size:14px;color:#30353a;transform:scaleX(1.0050);">94</span></td>
<td><span class="t" style="left:608.2px;top:798px;font-size:14px;color:#30353a;transform:scaleX(1.0050);">124</span></td>
<td><span class="t" style="left:735.5px;top:798px;font-size:14px;color:#30353a;transform:scaleX(1.0050);">54</span></td>
<td><span class="t" style="left:907.6px;top:798px;font-size:14px;color:#30353a;transform:scaleX(1.0050);">43</span></td>
<td><span class="t" style="left:1050px;top:798px;font-size:14px;color:#30353a;transform:scaleX(1.0050);">57</span></td>
<td><span class="t" style="left:1149.9px;top:798px;font-size:14px;color:#30353a;transform:scaleX(1.0050);">54</span></td>
<td><span class="t" style="left:1286.2px;top:798px;font-size:14px;color:#212529;font-weight:700;transform:scaleX(1.0200);">550</span></td>
</tr>
<tr>
<i class="hl" style="left:0px;top:851px;width:1366px;background:#dee2e6;"></i>
<td><svg width="17.400" height="15.200" style="left:0.200px;top:829.8px" viewBox="0 0 17 15"><path fill="#1a7cf5" d="M1.200 0h14.600c1 0 1.500 1.200.8 1.900L11 8v4.800c0 .4-.2.700-.5.900l-2.500 1.200c-.7.300-1.500-.2-1.500-1V8L.4 1.900C-.3 1.200.2 0 1.200 0z"/></svg><svg width="14" height="14" style="left:21.800px;top:829.8px" viewBox="0 0 14 14"><path d="M7 0v14M0 7h14" stroke="#1a7cf5" stroke-width="2.200"/></svg></td>
<td><span class="t" style="left:123.7px;top:829px;font-size:14px;color:#30353a;">Gotham GROUP</span></td>
<td><span class="t" style="left:364.3px;top:829px;font-size:14px;color:#30353a;transform:scaleX(1.0050);">55</span></td>
<td><span class="t" style="left:481.8px;top:829px;font-size:14px;color:#30353a;transform:scaleX(1.0050);">112</span></td>
<td><span class="t" style="left:608.2px;top:829px;font-size:14px;color:#30353a;transform:scaleX(1.0050);">108</span></td>
<td><span class="t" style="left:735.5px;top:829px;font-size:14px;color:#30353a;transform:scaleX(1.0050);">71</span></td>
<td><span class="t" style="left:907.6px;top:829px;font-size:14px;color:#30353a;transform:scaleX(1.0050);">56</span></td>
<td><span class="t" style="left:1050px;top:829px;font-size:14px;color:#30353a;transform:scaleX(1.0050);">60</span></td>
<td><span class="t" style="left:1149.9px;top:829px;font-size:14px;color:#30353a;transform:scaleX(1.0050);">15</span></td>
<td><span class="t" style="left:1286.2px;top:829px;font-size:14px;color:#212529;font-weight:700;transform:scaleX(1.0200);">477</span></td>
</tr>
<tr>
<i class="abs" style="left:0;top:851.4px;width:1366px;height:31.600px;background:#f2f2f2"></i>
<i class="hl" style="left:0px;top:883px;width:1366px;background:#dee2e6;"></i>
<td><svg width="17.400" height="15.200" style="left:0.200px;top:861.4px" viewBox="0 0 17 15"><path fill="#1a7cf5" d="M1.200 0h14.600c1 0 1.500 1.200.8 1.900L11 8v4.800c0 .4-.2.700-.5.900l-2.500 1.200c-.7.300-1.500-.2-1.500-1V8L.4 1.900C-.3 1.200.2 0 1.200 0z"/></svg></td>
<td><span class="t" style="left:123.7px;top:861px;font-size:14px;color:#30353a;transform:scaleX(1.0309);">UK Hospital</span></td>
<td><span class="t" style="left:364.3px;top:861px;font-size:14px;color:#30353a;transform:scaleX(1.0050);">104</span></td>
<td><span class="t" style="left:481.8px;top:861px;font-size:14px;color:#30353a;transform:scaleX(1.0050);">108</span></td>
<td><span class="t" style="left:608.2px;top:861px;font-size:14px;color:#30353a;transform:scaleX(1.0050);">116</span></td>
<td><span class="t" style="left:735.5px;top:861px;font-size:14px;color:#30353a;transform:scaleX(1.0050);">0</span></td>
<td><span class="t" style="left:907.6px;top:861px;font-size:14px;color:#30353a;transform:scaleX(1.0050);">0</span></td>
<td><span class="t" style="left:1050px;top:861px;font-size:14px;color:#30353a;transform:scaleX(1.0050);">0</span></td>
<td><span class="t" style="left:1149.9px;top:861px;font-size:14px;color:#30353a;transform:scaleX(1.0050);">19</span></td>
<td><span class="t" style="left:1286.2px;top:861px;font-size:14px;color:#212529;font-weight:700;transform:scaleX(1.0200);">347</span></td>
</tr>
<tr>
<i class="hl" style="left:0px;top:914px;width:1366px;background:#dee2e6;"></i>
<td><svg width="17.400" height="15.200" style="left:0.200px;top:893px" viewBox="0 0 17 15"><path fill="#1a7cf5" d="M1.200 0h14.600c1 0 1.500 1.200.8 1.900L11 8v4.800c0 .4-.2.700-.5.900l-2.500 1.200c-.7.300-1.500-.2-1.500-1V8L.4 1.900C-.3 1.200.2 0 1.200 0z"/></svg></td>
<td><span class="t" style="left:123.7px;top:892px;font-size:14px;color:#30353a;transform:scaleX(1.0533);">Smart Hospital</span></td>
<td><span class="t" style="left:364.3px;top:892px;font-size:14px;color:#30353a;transform:scaleX(1.0050);">10</span></td>
<td><span class="t" style="left:481.8px;top:892px;font-size:14px;color:#30353a;transform:scaleX(1.0050);">8</span></td>
<td><span class="t" style="left:608.2px;top:892px;font-size:14px;color:#30353a;transform:scaleX(1.0050);">7</span></td>
<td><span class="t" style="left:735.5px;top:892px;font-size:14px;color:#30353a;transform:scaleX(1.0050);">2</span></td>
<td><span class="t" style="left:907.6px;top:892px;font-size:14px;color:#30353a;transform:scaleX(1.0050);">7</span></td>
<td><span class="t" style="left:1050px;top:892px;font-size:14px;color:#30353a;transform:scaleX(1.0050);">4</span></td>
<td><span class="t" style="left:1149.9px;top:892px;font-size:14px;color:#30353a;transform:scaleX(1.0050);">4</span></td>
<td><span class="t" style="left:1286.2px;top:892px;font-size:14px;color:#212529;font-weight:700;transform:scaleX(1.0200);">42</span></td>
</tr>
</tbody><tfoot><tr><td></td>
<td><span class="t" style="left:123.7px;top:924px;font-size:14px;color:#212529;font-weight:700;transform:scaleX(0.9664);">Total for Exams</span></td>
<td><span class="t" style="left:364.3px;top:924px;font-size:14px;color:#212529;font-weight:700;transform:scaleX(1.0200);">761</span></td>
<td><span class="t" style="left:481.8px;top:924px;font-size:14px;color:#212529;font-weight:700;transform:scaleX(1.0200);">1781</span></td>
<td><span class="t" style="left:608.2px;top:924px;font-size:14px;color:#212529;font-weight:700;transform:scaleX(1.0200);">1763</span></td>
<td><span class="t" style="left:735.5px;top:924px;font-size:14px;color:#212529;font-weight:700;transform:scaleX(1.0200);">855</span></td>
<td><span class="t" style="left:907.6px;top:924px;font-size:14px;color:#212529;font-weight:700;transform:scaleX(1.0200);">610</span></td>
<td><span class="t" style="left:1050px;top:924px;font-size:14px;color:#212529;font-weight:700;transform:scaleX(1.0200);">868</span></td>
<td><span class="t" style="left:1149.9px;top:924px;font-size:14px;color:#212529;font-weight:700;transform:scaleX(1.0200);">381</span></td>
<td></td></tr></tfoot></table>
</section>
</main>
<aside id="side">
<svg width="19.800" height="15.200" preserveAspectRatio="none" style="left:15.9px;top:21.9px" viewBox="0 16 576 385"><path fill="#666e76" d="M572.500 193.800C518.300 88 410.900 16.300 288 16.300S57.700 88 3.500 193.800a32.400 32.400 0 0 0 0 29.200C57.700 328.800 165.100 400.500 288 400.500S518.300 328.800 572.500 223a32.400 32.400 0 0 0 0-29.200zM288 352.500a144 144 0 1 1 144-144 144 144 0 0 1-144 144zm0-240a95.300 95.300 0 0 0-25.300 3.800 47.900 47.900 0 0 1-67 67A95.800 95.800 0 1 0 288 112.500z"/></svg>
<h4><span class="t" style="left:44px;top:19px;font-size:20px;color:#666e76;transform:scale(0.9475,1.0683) skewX(0.05deg);transform-origin:0 17px;-webkit-text-stroke:0.35px #666e76;">Visualize</span></h4>
<span class="abs" style="left:401px;top:14px;width:31px;height:28px;border-radius:3px;background:#007bff"></span>
<svg width="12" height="12" style="left:410.5px;top:23.3px" viewBox="0 0 12 12"><path d="M6 0v12M0 6h12" stroke="#fff" stroke-width="2"/></svg>
<ul><li>
<svg width="20.600" height="16.400" preserveAspectRatio="none" style="left:36.6px;top:71.1px" viewBox="0 28 576 402"><path fill="#e6d862" d="M572.700 256.100L485.400 405.600A48 48 0 0 1 444 429.400H44.100c-18.500 0-30.100-20.100-20.700-36.100l87.300-149.500A48 48 0 0 1 152 220H552c18.500 0 30.100 20.100 20.700 36.100zM152 188h328v-48c0-26.500-21.500-48-48-48H272l-64-64H48C21.500 28 0 49.500 0 76v278l69.100-118.400C86.200 206.200 118 188 152 188z"/></svg>
<span class="t" style="left:64.9px;top:74px;font-size:15.5px;color:#7a8086;transform:scale(0.9462,1.0221) skewX(0.05deg);transform-origin:0 13px;">Operational Management</span>
<ul><li>
<span class="abs" style="left:43px;top:113px;width:404px;height:47.700px;background:#007bff"></span>
<svg width="18" height="18" style="left:62.7px;top:126.6px" viewBox="0 0 18 18"><circle cx="10.100" cy="10.600" r="7" fill="#466fa3"/><g stroke="#1f7cf0" stroke-width="0.900" fill="none"><path d="M3 8.300h14.200M3 12.900h14.200"/><ellipse cx="10.100" cy="10.600" rx="2.800" ry="7"/></g><rect x="0" y="0" width="8.300" height="8.400" rx="1.200" fill="#1f9c9c"/></svg>
<span class="t" style="left:84px;top:131px;font-size:15.5px;color:#fff;transform:scale(0.9275,1.0221) skewX(0.05deg);transform-origin:0 13px;">Imaging Center Utilization</span>
</li><li>
<svg width="18" height="18" style="left:62.7px;top:178.3px" viewBox="0 0 18 18"><circle cx="10.100" cy="10.600" r="7" fill="#6c757d"/><g stroke="#f8f9fa" stroke-width="0.900" fill="none"><path d="M3 8.300h14.200M3 12.900h14.200"/><ellipse cx="10.100" cy="10.600" rx="2.800" ry="7"/></g><rect x="0" y="0" width="8.300" height="8.400" rx="1.200" fill="#17a2b8"/></svg>
<span class="t" style="left:84px;top:183px;font-size:15.5px;color:#7a8086;transform:scale(0.9244,1.0221) skewX(0.05deg);transform-origin:0 13px;">Daily Activity Summary</span>
</li><li>
<svg width="18" height="18" style="left:62.7px;top:230.1px" viewBox="0 0 18 18"><circle cx="10.100" cy="10.600" r="7" fill="#6c757d"/><g stroke="#f8f9fa" stroke-width="0.900" fill="none"><path d="M3 8.300h14.200M3 12.900h14.200"/><ellipse cx="10.100" cy="10.600" rx="2.800" ry="7"/></g><rect x="0" y="0" width="8.300" height="8.400" rx="1.200" fill="#17a2b8"/></svg>
<span class="t" style="left:84px;top:235px;font-size:15.5px;color:#7a8086;transform:scale(0.9281,1.0221) skewX(0.05deg);transform-origin:0 13px;">Daily Operation Exam Volumes</span>
</li></ul></li>
<li><svg width="18" height="15" style="left:36.8px;top:285.4px" viewBox="0 0 18 15"><path fill="#e6d862" d="M1.800 0h4.700l2 2h7.700c1 0 1.800.800 1.800 1.800v9.400c0 1-.8 1.800-1.800 1.800H1.800C.8 15 0 14.200 0 13.200V1.800C0 .8.800 0 1.800 0z"/></svg><span class="t" style="left:62.7px;top:287px;font-size:15.5px;color:#7a8086;transform:scale(0.9413,1.0221) skewX(0.05deg);transform-origin:0 13px;">Performance Monitoring</span></li>
<li><svg width="18" height="15" style="left:36.8px;top:337.4px" viewBox="0 0 18 15"><path fill="#e6d862" d="M1.800 0h4.700l2 2h7.700c1 0 1.800.800 1.800 1.800v9.400c0 1-.8 1.800-1.800 1.800H1.800C.8 15 0 14.200 0 13.200V1.800C0 .8.800 0 1.800 0z"/></svg><span class="t" style="left:62.7px;top:339px;font-size:15.5px;color:#7a8086;transform:scale(0.9442,1.0221) skewX(0.05deg);transform-origin:0 13px;">Radiology Productivity</span></li>
<li><svg width="18" height="15" style="left:36.8px;top:389.4px" viewBox="0 0 18 15"><path fill="#e6d862" d="M1.800 0h4.700l2 2h7.700c1 0 1.800.800 1.800 1.800v9.400c0 1-.8 1.800-1.800 1.800H1.800C.8 15 0 14.200 0 13.200V1.800C0 .8.800 0 1.800 0z"/></svg><span class="t" style="left:62.7px;top:391px;font-size:15.5px;color:#7a8086;transform:scale(0.9247,1.0221) skewX(0.05deg);transform-origin:0 13px;">Predictive Forecasting</span></li>
<li><svg width="18" height="15" style="left:36.8px;top:441.4px" viewBox="0 0 18 15"><path fill="#e6d862" d="M1.800 0h4.700l2 2h7.700c1 0 1.800.800 1.800 1.800v9.400c0 1-.8 1.800-1.800 1.800H1.800C.8 15 0 14.200 0 13.200V1.800C0 .8.800 0 1.800 0z"/></svg><span class="t" style="left:62.7px;top:443px;font-size:15.5px;color:#7a8086;transform:scale(0.9340,1.0221) skewX(0.05deg);transform-origin:0 13px;">Incidental &amp; Follow Up Exams</span></li>
<li><svg width="18" height="15" style="left:36.8px;top:493.4px" viewBox="0 0 18 15"><path fill="#e6d862" d="M1.800 0h4.700l2 2h7.700c1 0 1.800.800 1.800 1.800v9.400c0 1-.8 1.800-1.800 1.800H1.800C.8 15 0 14.200 0 13.200V1.800C0 .8.800 0 1.800 0z"/></svg><span class="t" style="left:62.7px;top:495px;font-size:15.5px;color:#7a8086;transform:scale(0.9286,1.0221) skewX(0.05deg);transform-origin:0 13px;">Critical Findings Reporting</span></li>
<li><svg width="18" height="15" style="left:36.8px;top:545.4px" viewBox="0 0 18 15"><path fill="#e6d862" d="M1.800 0h4.700l2 2h7.700c1 0 1.800.800 1.800 1.800v9.400c0 1-.8 1.800-1.800 1.800H1.800C.8 15 0 14.200 0 13.200V1.800C0 .8.800 0 1.800 0z"/></svg><span class="t" style="left:62.7px;top:547px;font-size:15.5px;color:#7a8086;transform:scale(0.9227,1.0221) skewX(0.05deg);transform-origin:0 13px;">Referral Management.</span></li>
<li><svg width="18" height="15" style="left:36.8px;top:597.4px" viewBox="0 0 18 15"><path fill="#e6d862" d="M1.800 0h4.700l2 2h7.700c1 0 1.800.800 1.800 1.800v9.400c0 1-.8 1.800-1.800 1.800H1.800C.8 15 0 14.200 0 13.200V1.800C0 .8.800 0 1.800 0z"/></svg><span class="t" style="left:62.7px;top:599px;font-size:15.5px;color:#7a8086;transform:scale(0.9358,1.0221) skewX(0.05deg);transform-origin:0 13px;">Interventional Procedure Dashboards</span></li>
<li><svg width="18" height="15" style="left:36.8px;top:649.4px" viewBox="0 0 18 15"><path fill="#e6d862" d="M1.800 0h4.700l2 2h7.700c1 0 1.800.800 1.800 1.800v9.400c0 1-.8 1.800-1.800 1.800H1.800C.8 15 0 14.200 0 13.200V1.800C0 .8.800 0 1.800 0z"/></svg><span class="t" style="left:62.7px;top:651px;font-size:15.5px;color:#7a8086;transform:scale(0.9373,1.0221) skewX(0.05deg);transform-origin:0 13px;">AI Performance Monitoring</span></li>
<li><svg width="18" height="15" style="left:36.8px;top:701.4px" viewBox="0 0 18 15"><path fill="#e6d862" d="M1.800 0h4.700l2 2h7.700c1 0 1.800.800 1.800 1.800v9.400c0 1-.8 1.800-1.800 1.800H1.800C.8 15 0 14.200 0 13.200V1.800C0 .8.800 0 1.800 0z"/></svg><span class="t" style="left:62.7px;top:703px;font-size:15.5px;color:#7a8086;transform:scale(0.9353,1.0221) skewX(0.05deg);transform-origin:0 13px;">Cardiology</span></li>
<li><svg width="18" height="15" style="left:36.8px;top:753.4px" viewBox="0 0 18 15"><path fill="#e6d862" d="M1.800 0h4.700l2 2h7.700c1 0 1.800.800 1.800 1.800v9.400c0 1-.8 1.800-1.800 1.800H1.800C.8 15 0 14.200 0 13.200V1.800C0 .8.800 0 1.800 0z"/></svg><span class="t" style="left:62.7px;top:755px;font-size:15.5px;color:#7a8086;transform:scale(0.9379,1.0221) skewX(0.05deg);transform-origin:0 13px;">Other Reports</span></li>
</ul>
<svg width="18" height="18" style="left:17.7px;top:801.6px" viewBox="0 0 18 17"><circle cx="7.400" cy="7.200" r="6" fill="none" stroke="#666e76" stroke-width="1.900"/><path d="M11.900 11.700L17.200 16.700" stroke="#666e76" stroke-width="2.200" stroke-linecap="round"/><path d="M4.700 11.700v-2.500M7.500 11.700v-4.500M9.900 11.700v-6" stroke="#9a9fa3" stroke-width="1.500"/></svg>
<h4><span class="t" style="left:47px;top:804px;font-size:20px;color:#666e76;transform:scale(0.9496,1.0683) skewX(0.05deg);transform-origin:0 17px;-webkit-text-stroke:0.35px #666e76;">Explore</span></h4>
<svg width="27" height="21" style="left:13.9px;top:851.7px" viewBox="0 0 27 21"><g fill="#666e76"><path d="M1.200 0h5.300l3 3v8.300c0 .7-.5 1.200-1.200 1.200H1.200C.5 12.500 0 12 0 11.300V1.200C0 .5.500 0 1.200 0z"/><path d="M18.700 8.500H24l3 3v8.300c0 .7-.5 1.200-1.200 1.200h-7.100c-.7 0-1.200-.5-1.200-1.200v-10.100c0-.7.500-1.200 1.200-1.200z"/></g><g stroke="#666e76" stroke-width="1.200" fill="none"><path d="M10.500 6.500h4.500m-1.800-1.800l1.800 1.800-1.800 1.800"/><path d="M17 15h-4.500m1.800-1.800L12.500 15l1.800 1.800"/></g><path d="M2.500 6.500h5M20 15h5" stroke="#f8f9fa" stroke-width="1.200"/></svg>
<h4><span class="t" style="left:46.6px;top:856px;font-size:20px;color:#666e76;transform:scale(0.9300,1.0683) skewX(0.05deg);transform-origin:0 17px;-webkit-text-stroke:0.35px #666e76;">Compare</span></h4>
<svg width="18" height="23" style="left:18.7px;top:901.3px" viewBox="0 0 18 23"><path fill="#666e76" d="M2.200 3.500h3.600C6 1.800 7.300.3 9 .3s3 1.500 3.200 3.200h3.600c1.200 0 2.200 1 2.200 2.200v14.800c0 1.200-1 2.200-2.200 2.200H2.200C1 22.700 0 21.700 0 20.500V5.700c0-1.200 1-2.200 2.200-2.200z"/><circle cx="9" cy="3.700" r="1.200" fill="#f8f9fa"/><circle cx="8.800" cy="14.500" r="5.500" fill="#f8f9fa"/><g stroke="#666e76" fill="none"><path d="M8.300 16.800l2.300-5.200" stroke-width="1.400"/><path d="M5 14.300l1 .2M5.900 11.700l.8.700M8.300 10.400l.1 1M12.300 13.300l-.9.400" stroke-width="1"/></g></svg>
<h4><span class="t" style="left:47.5px;top:904px;font-size:20px;color:#666e76;transform:scale(0.9659,1.0683) skewX(0.05deg);transform-origin:0 17px;-webkit-text-stroke:0.35px #666e76;">Efficiency Monitor</span></h4>
<i class="abs" style="left:16px;top:952.7px;width:416px;height:1.300px;background:#3c4146"></i>
<i class="abs" style="left:447.8px;top:1px;width:2.200px;height:953px;background:#dcdcdc"></i>
<i class="abs" style="left:448px;top:1px;width:2.500px;height:738px;background:#707070;border-radius:1px"></i>
</aside>
</body></html>
